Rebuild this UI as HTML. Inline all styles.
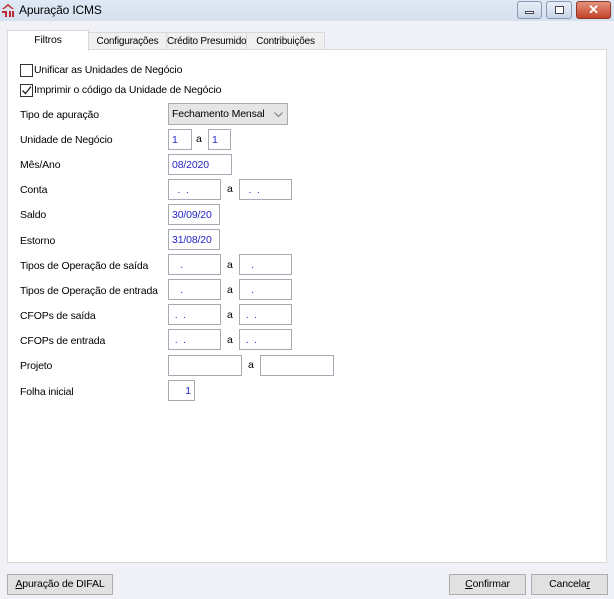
<!DOCTYPE html>
<html><head><meta charset="utf-8"><style>
*{margin:0;padding:0;box-sizing:border-box}
body{width:614px;height:599px;background:#f0f1f6;font-family:"Liberation Sans",sans-serif;font-size:10.5px;letter-spacing:-0.15px;color:#000;position:relative;overflow:hidden;white-space:nowrap}
.a{position:absolute}
.title{left:0;top:0;width:614px;height:21px;background:linear-gradient(#dfe8f4,#d5e1f0)}
.panel{left:7px;top:49px;width:600px;height:514px;background:#fff;border:1px solid #d9d9d9}
.tab{top:32px;height:18px;background:#f0f0f0;border:1px solid #d9d9d9;text-align:center;line-height:17px;font-size:10px;letter-spacing:-0.2px}
.lbl{left:20px;line-height:14px}
.f{height:21px;border:1px solid #a9a9b4;background:#fff;color:#2323c8;line-height:20px;padding-left:3px}
.btn{height:21px;background:#e1e1e1;border:1px solid #adadad;text-align:center;line-height:19px}
.cb{width:13px;height:13px;border:1px solid #333;background:#fff}
.wb{top:1px;height:18px;border:1px solid #8a9ab4;border-radius:3px;background:linear-gradient(#e8eef7,#c9d6e8)}
</style></head><body>
<div class="a title"></div>
<svg class="a" style="left:1px;top:3px" width="14" height="15" viewBox="0 0 14 15"><path d="M1 6 L7 1 L13 6 L11 6 L7 3 L3 6Z" fill="#c0282c"/><path d="M1 8 L6 8 L6 14 L4 14 L4 10 L1 10Z M8 8 L10 8 L10 14 L8 14Z M11 8 L13 8 L13 14 L11 14Z" fill="#c0282c"/></svg>
<div class="a" style="left:19px;top:3px;font-size:12px;color:#000">Apuração ICMS</div>
<div class="a wb" style="left:517px;width:25px"><div class="a" style="left:7px;top:9px;width:9px;height:3px;background:#fff;border:1px solid #445"></div></div>
<div class="a wb" style="left:546px;width:26px"><div class="a" style="left:8px;top:4px;width:9px;height:8px;border:1px solid #445;background:#fff"></div></div>
<div class="a" style="left:576px;top:1px;width:35px;height:18px;border:1px solid #8b3a2a;border-radius:3px;background:linear-gradient(#e6927c,#c3432b);color:#fff;font-weight:bold;font-size:13px;text-align:center;line-height:16px">✕</div>
<div class="a panel"></div>
<div class="a tab" style="left:88px;width:79px">Configurações</div>
<div class="a tab" style="left:166px;width:81px">Crédito Presumido</div>
<div class="a tab" style="left:246px;width:79px">Contribuições</div>
<div class="a" style="left:7px;top:30px;width:82px;height:21px;background:#fff;border:1px solid #d9d9d9;border-bottom:none;text-align:center;line-height:19px">Filtros</div>
<div class="a cb" style="left:20px;top:64px"></div><div class="a" style="left:34px;top:64px">Unificar as Unidades de Negócio</div>
<div class="a cb" style="left:20px;top:84px"></div><svg class="a" style="left:21px;top:85px" width="11" height="11"><path d="M1.5 5.5 L4.5 8.5 L10 1.5" stroke="#222" stroke-width="1.3" fill="none"/></svg><div class="a" style="left:34px;top:84px">Imprimir o código da Unidade de Negócio</div>
<div class="a lbl" style="top:108px">Tipo de apuração</div>
<div class="a" style="left:168px;top:103px;width:120px;height:22px;background:#e5e5e5;border:1px solid #acacac;line-height:20px;padding-left:3px">Fechamento Mensal<svg class="a" style="left:105px;top:8px" width="9" height="6"><path d="M0.5 0.5 L4.5 4.5 L8.5 0.5" stroke="#777" fill="none"/></svg></div>
<div class="a lbl" style="top:133px">Unidade de Negócio</div>
<div class="a f" style="left:168px;top:129px;width:24px">1</div><div class="a" style="left:196px;top:133px">a</div><div class="a f" style="left:208px;top:129px;width:23px">1</div>
<div class="a lbl" style="top:158px">Mês/Ano</div>
<div class="a f" style="left:168px;top:154px;width:64px">08/2020</div>
<div class="a lbl" style="top:183px">Conta</div>
<div class="a f" style="left:168px;top:179px;width:53px">&nbsp; .&nbsp; .</div><div class="a" style="left:227px;top:183px">a</div><div class="a f" style="left:239px;top:179px;width:53px">&nbsp; .&nbsp; .</div>
<div class="a lbl" style="top:208px">Saldo</div>
<div class="a f" style="left:168px;top:204px;width:52px">30/09/20</div>
<div class="a lbl" style="top:234px">Estorno</div>
<div class="a f" style="left:168px;top:229px;width:52px">31/08/20</div>
<div class="a lbl" style="top:259px">Tipos de Operação de saída</div>
<div class="a f" style="left:168px;top:254px;width:53px">&nbsp;&nbsp; .</div><div class="a" style="left:227px;top:259px">a</div><div class="a f" style="left:239px;top:254px;width:53px">&nbsp;&nbsp; .</div>
<div class="a lbl" style="top:284px">Tipos de Operação de entrada</div>
<div class="a f" style="left:168px;top:279px;width:53px">&nbsp;&nbsp; .</div><div class="a" style="left:227px;top:284px">a</div><div class="a f" style="left:239px;top:279px;width:53px">&nbsp;&nbsp; .</div>
<div class="a lbl" style="top:309px">CFOPs de saída</div>
<div class="a f" style="left:168px;top:304px;width:53px">&nbsp;.&nbsp; .</div><div class="a" style="left:227px;top:309px">a</div><div class="a f" style="left:239px;top:304px;width:53px">&nbsp;.&nbsp; .</div>
<div class="a lbl" style="top:334px">CFOPs de entrada</div>
<div class="a f" style="left:168px;top:329px;width:53px">&nbsp;.&nbsp; .</div><div class="a" style="left:227px;top:334px">a</div><div class="a f" style="left:239px;top:329px;width:53px">&nbsp;.&nbsp; .</div>
<div class="a lbl" style="top:359px">Projeto</div>
<div class="a f" style="left:168px;top:355px;width:74px"></div><div class="a" style="left:248px;top:359px">a</div><div class="a f" style="left:260px;top:355px;width:74px"></div>
<div class="a lbl" style="top:385px">Folha inicial</div>
<div class="a f" style="left:168px;top:380px;width:27px;text-align:right;padding-right:3px">1</div>
<div class="a btn" style="left:7px;top:574px;width:106px"><u>A</u>puração de DIFAL</div>
<div class="a btn" style="left:449px;top:574px;width:77px"><u>C</u>onfirmar</div>
<div class="a btn" style="left:531px;top:574px;width:77px">Cancela<u>r</u></div>
</body></html>
